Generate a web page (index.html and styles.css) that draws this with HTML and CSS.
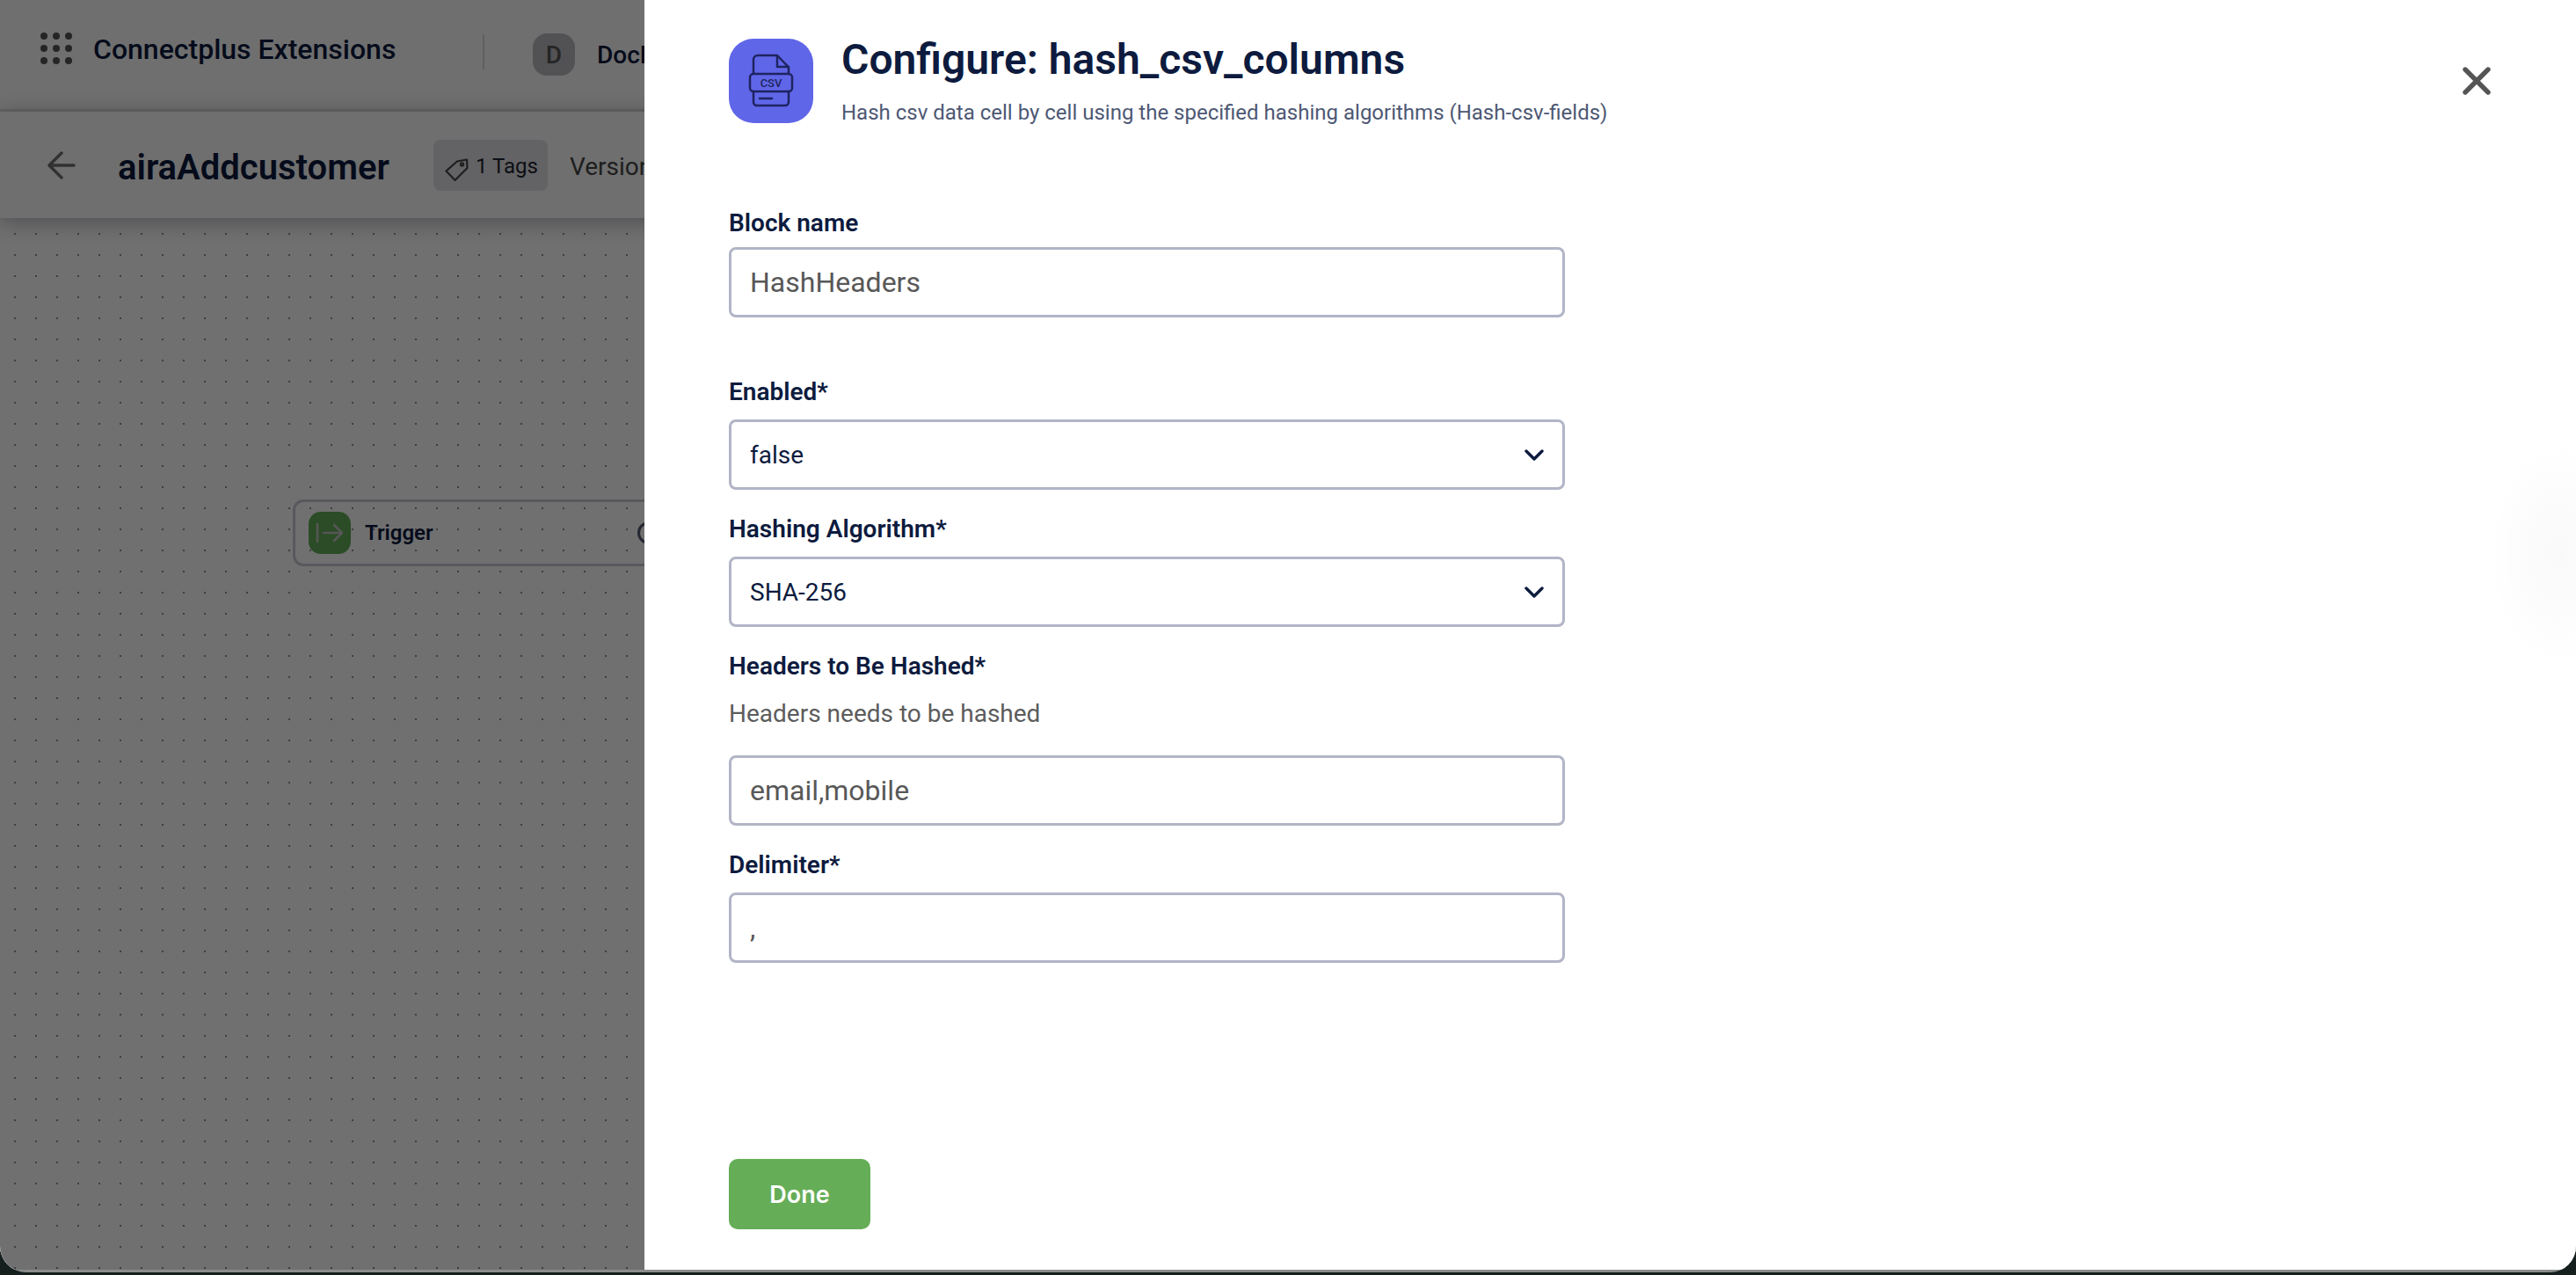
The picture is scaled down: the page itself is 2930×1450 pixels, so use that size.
FILE: index.html
```html
<!DOCTYPE html>
<html lang="en">
<head>
<meta charset="utf-8">
<title>Configure: hash_csv_columns</title>
<link rel="stylesheet" href="styles.css">
</head>
<body>
<div class="window">
  <div class="app">
    <header class="topbar">
      <div class="apps-grid"><i></i><i></i><i></i><i></i><i></i><i></i><i></i><i></i><i></i></div>
      <span class="product">Connectplus Extensions</span>
      <span class="divider"></span>
      <span class="avatar">D</span>
      <span class="workspace">DocDocs</span>
    </header>
    <div class="flowbar">
      <svg class="back" width="32" height="32" viewBox="0 0 32 32" fill="none" stroke="#707070" stroke-width="3.4" stroke-linecap="round" stroke-linejoin="round"><path d="M30 16H3M16 2 2 16l14 14"/></svg>
      <span class="flow-name">airaAddcustomer</span>
      <span class="tags">
        <svg width="28" height="28" viewBox="0 0 28 28" fill="none" stroke="#444" stroke-width="2.2" stroke-linejoin="round"><path d="M15 4.500 26 2.500 26.500 12 12.500 26 2.500 15.500Z"/><circle cx="20.500" cy="8" r="1.600"/></svg>
        <span class="tags-text">1 Tags</span>
      </span>
      <span class="version">Version 1</span>
    </div>
    <main class="canvas">
      <div class="node">
        <span class="node-icon">
          <svg width="32" height="24" viewBox="0 0 32 24" fill="none" stroke="#c4c4c4" stroke-width="2.600" stroke-linecap="round" stroke-linejoin="round"><path d="M2 2v20M9 12h21M21 3l9 9-9 9"/></svg>
        </span>
        <span class="node-label">Trigger</span>
        <span class="node-status"></span>
      </div>
    </main>
  </div>
  <div class="scrim"></div>
  <aside class="panel">
    <div class="panel-head">
      <span class="block-icon">
        <svg width="96" height="96" viewBox="0 0 96 96" fill="none" stroke="#1e2460" stroke-width="2.500" stroke-linecap="round" stroke-linejoin="round">
          <path d="M28 40V24a5 5 0 0 1 5-5h22l13 13.500V40"/>
          <path d="M55 19.500V32h13"/>
          <path d="M28 60v12a4 4 0 0 0 4 4h32a4 4 0 0 0 4-4V60"/>
          <rect x="24" y="40" width="48" height="20" rx="4"/>
          <path d="M35 68h14"/>
          <text class="csv-text" x="48" y="55" text-anchor="middle">CSV</text>
        </svg>
      </span>
      <div class="head-text">
        <h1>Configure: hash_csv_columns</h1>
        <p>Hash csv data cell by cell using the specified hashing algorithms (Hash-csv-fields)</p>
      </div>
      <button class="close" type="button" aria-label="Close">
        <svg width="32" height="32" viewBox="0 0 32 32" fill="none" stroke="#555" stroke-width="5.400" stroke-linecap="round"><path d="M3 3l26 26M29 3 3 29"/></svg>
      </button>
    </div>
    <form class="form">
      <div class="field field-name">
        <label>Block name</label>
        <div class="control value-muted">HashHeaders</div>
      </div>
      <div class="field">
        <label>Enabled*</label>
        <div class="control select"><span>false</span>
          <svg width="22" height="13" viewBox="0 0 22 13" fill="none" stroke="#0d1b3e" stroke-width="3.400" stroke-linecap="round" stroke-linejoin="round"><path d="M2 2l9 9 9-9"/></svg>
        </div>
      </div>
      <div class="field">
        <label>Hashing Algorithm*</label>
        <div class="control select"><span>SHA-256</span>
          <svg width="22" height="13" viewBox="0 0 22 13" fill="none" stroke="#0d1b3e" stroke-width="3.400" stroke-linecap="round" stroke-linejoin="round"><path d="M2 2l9 9 9-9"/></svg>
        </div>
      </div>
      <div class="field">
        <label class="label-help">Headers to Be Hashed*</label>
        <p class="help">Headers needs to be hashed</p>
        <div class="control value-muted">email,mobile</div>
      </div>
      <div class="field">
        <label>Delimiter*</label>
        <div class="control value-muted">,</div>
      </div>
    </form>
    <div class="panel-foot">
      <button class="done" type="button">Done</button>
    </div>
    <div class="edge-glow"></div>
  </aside>
</div>
</body>
</html>
```

FILE: styles.css
```css
* { box-sizing: border-box; }
html, body { margin: 0; height: 100%; }
body {
  background: #141f1e;
  font-family: "Roboto", "Liberation Sans", sans-serif;
  color: #0d1b3e;
  overflow: hidden;
}
.window {
  position: relative;
  height: 1447px;
  background: #8c8c8c;
  border-radius: 0 0 30px 30px;
  overflow: hidden;
}
.app {
  height: 1444px;
  display: flex;
  flex-direction: column;
  background: #fff;
}
.topbar {
  height: 127px;
  flex: none;
  display: flex;
  align-items: center;
  padding: 0 0 14px 46px;
  border-bottom: 3px solid #e6e6e6;
  background: #fdfdfd;
}
.apps-grid {
  display: grid;
  grid-template-columns: repeat(3, 8px);
  grid-auto-rows: 8px;
  gap: 6px;
  margin-right: 24px;
}
.apps-grid i { background: #555; border-radius: 50%; }
.product { font-size: 32px; font-weight: 500; width: 443px; white-space: nowrap; padding-top: 2px; }
.divider { width: 2px; height: 40px; background: #d8d8d8; margin-top: 8px; margin-right: 55px; }
.avatar {
  width: 48px; height: 48px; border-radius: 16px;
  background: #bcbcc0; color: #555;
  display: flex; align-items: center; justify-content: center;
  font-size: 28px; font-weight: 500;
  margin-top: 14px; margin-right: 25px;
}
.workspace { font-size: 28px; font-weight: 500; margin-top: 14px; }
.flowbar {
  height: 121px;
  flex: none;
  display: flex;
  align-items: center;
  padding-left: 54px;
  background: #fdfdfd;
  box-shadow: 0 4px 24px rgba(20, 24, 50, .35);
  position: relative;
}
.back { margin-right: 48px; }
.flow-name { font-size: 40px; font-weight: 600; width: 359px; padding-top: 5px; }
.tags {
  display: flex; align-items: center; gap: 8px;
  height: 58px; width: 130px;
  padding-left: 12px;
  background: #e2e2e6; border-radius: 8px;
  font-size: 24px; color: #1c2230;
  margin-right: 25px;
}
.tags svg { margin-top: 10px; flex: none; }
.tags-text { padding-top: 3px; }
.version { font-size: 28px; color: #444; white-space: nowrap; padding-top: 3px; }
.canvas {
  flex: 1;
  padding: 320px 0 0 333px;
  background-color: #fff;
  background-image: radial-gradient(circle, #8e8e8e 1.1px, transparent 1.3px);
  background-size: 24px 24px;
  background-position: 5px 6px;
}
.node {
  width: 520px; height: 76px;
  display: flex; align-items: center;
  padding: 0 15px;
  border: 3px solid #c8c8d4;
  border-radius: 12px;
}
.node-icon {
  width: 48px; height: 48px; border-radius: 14px;
  background: #62ad58;
  display: flex; align-items: center; justify-content: center;
  margin-right: 16px;
}
.node-label { font-size: 24px; font-weight: 600; width: 310px; }
.node-status { width: 26px; height: 26px; border: 3px solid #555a70; border-radius: 50%; }
.scrim {
  position: absolute; left: 0; right: 0; top: 0; height: 1444px;
  background: rgba(0, 0, 0, .56);
}
.panel {
  position: absolute; top: 0; right: 0;
  width: 2197px; height: 1444px;
  background: #fff;
  padding: 44px 96px 46px;
  display: flex;
  flex-direction: column;
  overflow: hidden;
}
.panel-head { display: flex; height: 96px; flex: none; }
.block-icon {
  width: 96px; height: 96px; border-radius: 28px;
  background: #6066e8; flex: none;
}
.block-icon svg { display: block; }
.csv-text { font-family: "Roboto", sans-serif; font-size: 13px; font-weight: 500; fill: #1e2460; stroke: none; }
.head-text { margin-left: 32px; flex: 1; }
h1 { margin: 0; font-size: 48px; line-height: 56px; font-weight: 600; color: #0d1b3e; margin-top: -4px; }
.head-text p { margin: 16px 0 0; font-size: 24px; line-height: 32px; color: #4d5874; }
.close {
  border: 0; background: none; padding: 0;
  width: 32px; height: 32px; margin-top: 32px; margin-right: 0;
  align-self: flex-start; position: relative; left: -1px;
}
.close svg { display: block; }
.form { margin-top: 97px; display: flex; flex-direction: column; width: 951px; }
.field { margin-bottom: 28px; }
.field label { display: block; font-size: 28px; line-height: 30px; font-weight: 600; color: #0d1b3e; padding-top: 2px; margin-bottom: 16px; height: 32px; }
.field-name { margin-bottom: 68px; }
.field-name label { margin-bottom: 12px; }
.field label.label-help { margin-bottom: 21px; }
.help { margin: 0 0 31px; font-size: 28px; line-height: 32px; color: #5c5c5c; padding-top: 2px; }
.control {
  height: 80px;
  border: 3px solid #b1b5c6;
  border-radius: 8px;
  padding: 0 21px;
  display: flex; align-items: center;
  font-size: 32px;
  background: #fff;
}
.value-muted { color: #585858; }
.select { justify-content: space-between; color: #0d1b3e; padding-right: 21px; font-size: 28px; }
.panel-foot { margin-top: auto; }
.done {
  width: 161px; height: 80px;
  border: 0; border-radius: 10px;
  background: #66ad58; color: #fff;
  font-family: "Inter", sans-serif; font-size: 27px; font-weight: 600;
}
.edge-glow {
  position: absolute; right: -60px; top: 500px;
  width: 160px; height: 260px;
  background: radial-gradient(ellipse closest-side, rgba(0, 0, 0, .025), rgba(0, 0, 0, 0));
  pointer-events: none;
}
```
